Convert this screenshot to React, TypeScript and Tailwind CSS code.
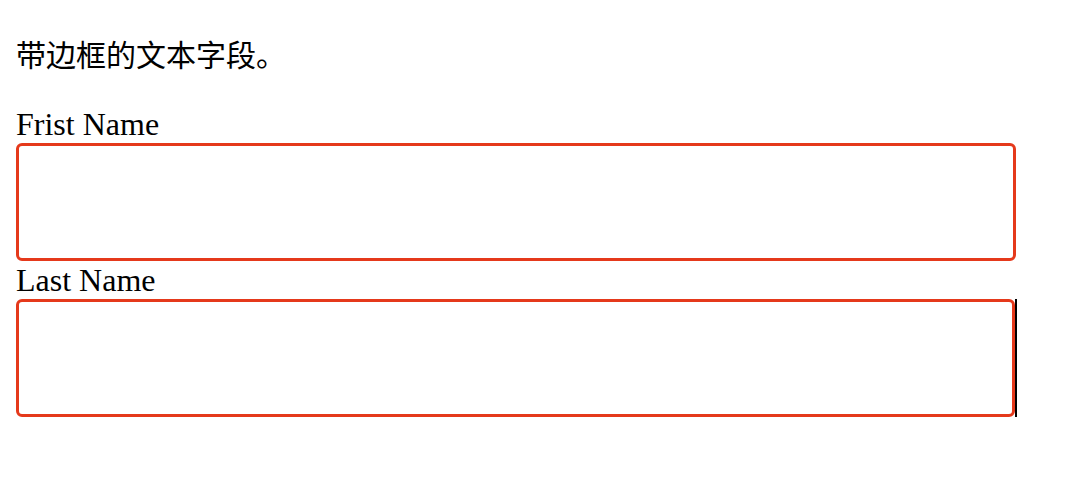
export default function App() {
  return (
    <div className="min-h-screen bg-white px-4 pt-[32px] text-black">
      <h2 className="text-[30px] leading-[42px] font-['Noto_Sans_CJK_SC',sans-serif] font-normal">
        带边框的文本字段。
      </h2>

      <form className="mt-[32px] flex flex-col font-['Liberation_Serif',serif] text-[32px] leading-[37px]">
        <label htmlFor="first-name">Frist Name</label>
        <input
          id="first-name"
          type="text"
          className="h-[118px] w-[1000px] rounded-md border-[3px] border-[#e5391b] bg-white outline-none"
        />

        <label htmlFor="last-name" className="mt-px">
          Last Name
        </label>
        <div className="flex">
          <input
            id="last-name"
            type="text"
            className="h-[118px] w-[999px] rounded-md border-[3px] border-[#e5391b] bg-white outline-none"
          />
          <div className="w-[2px] bg-black" />
        </div>
      </form>
    </div>
  );
}
